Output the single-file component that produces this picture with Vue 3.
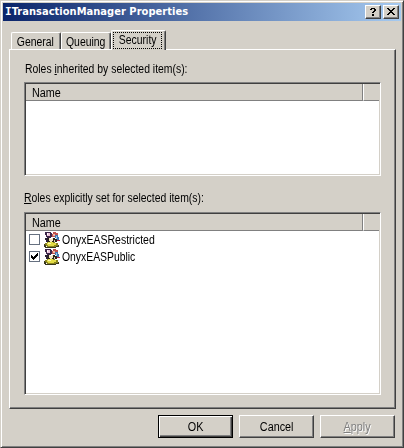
<script setup>
const tabs = [
  { name: 'General', width: 50 },
  { name: 'Queuing', width: 50 },
  { name: 'Security', width: 55, active: true },
]
const roles = [
  { name: 'OnyxEASRestricted', checked: false, cls: 'restricted' },
  { name: 'OnyxEASPublic', checked: true, cls: 'public' },
]
</script>

<template>
  <div class="window">
    <header class="titlebar">
      <div class="title"><span class="cap">I</span>TransactionManager Properties</div>
      <div class="controls">
        <button class="ctl" aria-label="Help">
          <svg width="12" height="10" viewBox="0 0 12 10" shape-rendering="crispEdges">
            <path d="M4 1h4v1H4zM3 2h2v1H3zM7 2h2v2H7zM6 4h2v1H6zM5 5h2v1H5zM5 7h2v2H5z" />
          </svg>
        </button>
        <button class="ctl" aria-label="Close">
          <svg width="12" height="10" viewBox="0 0 12 10" shape-rendering="crispEdges">
            <path d="M2 1h2v1H2zM8 1h2v1H8zM3 2h2v1H3zM7 2h2v1H7zM4 3h4v1H4zM5 4h2v1H5zM4 5h4v1H4zM3 6h2v1H3zM7 6h2v1H7zM2 7h2v1H2zM8 7h2v1H8z" />
          </svg>
        </button>
      </div>
    </header>

    <nav class="tabs">
      <div v-for="t in tabs" :key="t.name" class="tab" :class="{ active: t.active }" :style="{ width: t.width + 'px' }">
        <span class="tab-label"><span class="text" :class="t.name.toLowerCase()">{{ t.name }}</span></span>
      </div>
    </nav>

    <main class="panel">
      <div class="label first"><span class="text">Roles <u>i</u>nherited by selected item(s):</span></div>
      <section class="list inherited">
        <div class="head"><div class="col"><span class="text name">Name</span></div><div class="rest"></div></div>
      </section>
      <div class="label second"><span class="text"><u>R</u>oles explicitly set for selected item(s):</span></div>
      <section class="list explicit">
        <div class="head"><div class="col"><span class="text name">Name</span></div><div class="rest"></div></div>
        <div v-for="r in roles" :key="r.name" class="row">
          <div class="check">
            <svg v-if="r.checked" width="9" height="9" viewBox="0 0 9 9" shape-rendering="crispEdges">
              <path d="M1 3h1v3H1zM2 4h1v3H2zM3 5h1v3H3zM4 4h1v3H4zM5 3h1v3H5zM6 2h1v3H6zM7 1h1v3H7z" />
            </svg>
          </div>
          <svg class="people" width="16" height="16" viewBox="0 0 16 16" shape-rendering="crispEdges">
            <path d="M1 0h6v1h1v4H7v2H3V5H2V3H1z" fill="#3c2548" />
            <path d="M3 1h3v3H3z" fill="#efc6dc" />
            <path d="M3 1h1v2H3z" fill="#fff" />
            <path d="M9 0h3v1h2v3h-2v1H8V2h1z" fill="#c0524f" />
            <path d="M9 2h2v2H9z" fill="#f0b8a4" />
            <path d="M11 3h3v2h1v3h-3V6h-1z" fill="#3f76b4" />
            <path d="M12 4h1v3h-1z" fill="#93c8e8" />
            <path d="M12 8h4v1h-4z" fill="#b02848" />
            <path d="M1 6h3v4H2V8H1z" fill="#2c2134" />
            <path d="M4 6h7v1h2v3H4z" fill="#292415" />
            <path d="M5 6h4v3H8v2H6V9H5z" fill="#f4e6c4" />
            <path d="M6 6h2v1H6z" fill="#fff" />
            <path d="M10 8h1v2h-1z" fill="#d8c8c0" />
            <path d="M3 10h8v1h3v3h-2v1H3v-1H1v-3h2z" fill="#8a8520" />
            <path d="M4 10h5v1h3v2h-2v1H4v-1H3v-2h1z" fill="#e4dd45" />
            <path d="M4 11h3v1H4z" fill="#fffaa8" />
            <path d="M0 12h1v1h1v2h2v1H1v-1H0zM12 14h2v-1h1v2h-3zM4 15h8v1H4z" fill="#38361c" />
          </svg>
          <span class="text role" :class="r.cls">{{ r.name }}</span>
        </div>
      </section>
    </main>

    <footer class="actions">
      <button class="btn default"><span class="text">OK</span></button>
      <button class="btn"><span class="text cancel">Cancel</span></button>
      <button class="btn disabled"><span class="text apply"><u>A</u>pply</span></button>
    </footer>
  </div>
</template>

<style>
body { margin: 0; background: #d4d0c8; }
</style>

<style scoped>
* { box-sizing: border-box; }
.window {
  width: 404px; height: 448px; background: #d4d0c8; color: #000;
  font: 12px/14px "Liberation Sans", Arial, sans-serif;
  border: 1px solid; border-color: #d4d0c8 #404040 #404040 #d4d0c8;
  box-shadow: inset 1px 1px #fff, inset -1px -1px #808080;
  padding: 2px; overflow: hidden; white-space: nowrap;
}
.titlebar {
  height: 18px; display: flex; align-items: center; justify-content: space-between;
  padding: 0 2px; background: linear-gradient(90deg, #0a246a, #a6caf0);
}
.title { color: #fff; font: bold 11px/18px "DejaVu Sans Condensed", "DejaVu Sans", sans-serif; letter-spacing: 0.04px; }
.cap { font-family: "DejaVu Sans Mono", monospace; }
.controls { display: flex; gap: 2px; }
button { margin: 0; padding: 0; font: inherit; color: inherit; background: #d4d0c8; border-radius: 0; display: flex; align-items: center; justify-content: center; }
.ctl { width: 16px; height: 14px; border: 1px solid; border-color: #fff #404040 #404040 #fff; box-shadow: inset -1px -1px #808080; }
.ctl svg, .check svg, .people { display: block; }
.text { display: inline-block; transform: scaleX(0.9); transform-origin: center; }
.tabs { height: 28px; padding-left: 8px; display: flex; align-items: flex-end; }
.tab {
  height: 17px; display: flex; align-items: center; justify-content: center;
  border: 1px solid; border-color: #fff #404040 transparent #fff; border-bottom: 0;
  border-radius: 2px 2px 0 0; box-shadow: inset -1px 0 #808080; padding: 1px 1px 0 0;
}
.tab.active { height: 20px; background: #d4d0c8; position: relative; z-index: 1; margin-bottom: -1px; padding: 0 2px 1px 0; }
.tab-label { display: flex; justify-content: center; }
.tab .text { transform: scaleX(0.87); }
.active .tab-label { border: 1px dotted #000; height: 17px; width: 49px; line-height: 14px; }
.panel {
  margin-left: 6px; width: 387px; height: 360px; padding: 12px 0 0 14px;
  border: 1px solid; border-color: #fff #404040 #404040 #fff; box-shadow: inset -1px -1px #808080;
}
.label { height: 14px; }
.label .text, .name, .role { transform-origin: left center; }
.label .text { transform: scaleX(0.867); }
.first { padding-left: 1px; }
.second { margin-top: 15px; }
u { text-decoration: underline; text-underline-offset: 1px; text-decoration-thickness: 1px; text-decoration-skip-ink: none; }
.list {
  width: 357px; background: #fff; border: 1px solid; border-color: #808080 #fff #fff #808080;
  box-shadow: inset 1px 1px #404040, inset -1px -1px #d4d0c8; padding: 1px;
}
.inherited { height: 94px; margin-top: 6px; }
.explicit { height: 183px; margin-top: 7px; }
.head { height: 17px; display: flex; }
.col, .rest { background: #d4d0c8; border-bottom: 1px solid #808080; }
.col { width: 337px; border-right: 1px solid #808080; padding: 2px 0 0 6px; }
.rest { flex: 1; border-left: 1px solid #fff; }
.row { height: 17px; display: flex; align-items: center; padding-left: 3px; }
.check { width: 11px; height: 11px; border: 1px solid #667080; background: #fff; }
.people { margin-left: 4px; }
.role { margin-left: 2px; }
.restricted { transform: scaleX(0.875); }
.public { transform: scaleX(0.865); }
.actions { display: flex; gap: 6px; padding: 6px 0 0 155px; }
.btn { width: 75px; height: 23px; border: 1px solid; border-color: #fff #404040 #404040 #fff; box-shadow: inset -1px -1px #808080; }
.default { border-color: #000; box-shadow: inset 1px 1px #fff, inset -1px -1px #404040, inset -2px -2px #808080; }
.disabled { color: #808080; text-shadow: 1px 1px #fff; }
</style>
